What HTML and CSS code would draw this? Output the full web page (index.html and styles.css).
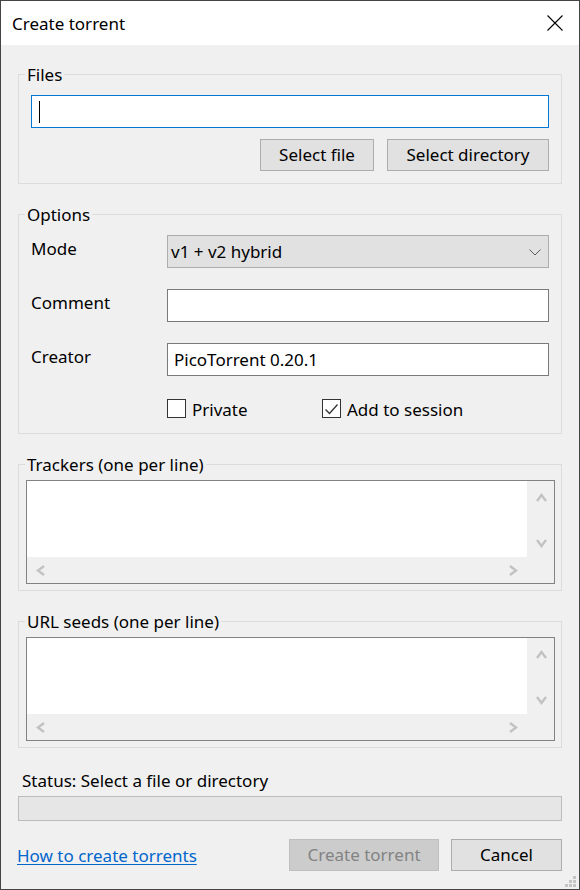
FILE: index.html
```html
<!DOCTYPE html>
<html lang="en">
<head>
<meta charset="utf-8">
<title>Create torrent</title>
<link rel="stylesheet" href="styles.css">
</head>
<body>
<div class="window">
  <div class="titlebar">
    <span class="title">Create torrent</span>
    <svg class="close" width="16" height="16" viewBox="0 0 16 16"><path d="M0.5 0.5L15.5 15.5M15.5 0.5L0.5 15.5" stroke="#000" stroke-width="1.1" fill="none"/></svg>
  </div>
  <div class="content">
    <fieldset class="group">
      <legend>Files</legend>
      <div class="inner files">
        <div class="textbox focused"><span class="caret"></span></div>
        <div class="btnrow">
          <button class="btn w-file">Select file</button>
          <button class="btn w-dir">Select directory</button>
        </div>
      </div>
    </fieldset>

    <fieldset class="group">
      <legend>Options</legend>
      <div class="inner options">
        <div class="row">
          <span class="lbl">Mode</span>
          <div class="select">
            <span>v1 + v2 hybrid</span>
            <svg class="chev" width="12" height="7" viewBox="0 0 12 7"><polyline points="0.5,0.5 6,6 11.5,0.5" fill="none" stroke="#5a5a5a" stroke-width="1"/></svg>
          </div>
        </div>
        <div class="row">
          <span class="lbl">Comment</span>
          <div class="textbox"></div>
        </div>
        <div class="row">
          <span class="lbl">Creator</span>
          <div class="textbox"><span class="val">PicoTorrent 0.20.1</span></div>
        </div>
        <div class="checks">
          <label class="check c-private"><span class="box"></span><span>Private</span></label>
          <label class="check"><span class="box"><svg width="17" height="17" viewBox="0 0 17 17"><polyline points="2.5,9.5 6.5,13.5 14.5,4.5" fill="none" stroke="#333" stroke-width="1.3"/></svg></span><span>Add to session</span></label>
        </div>
      </div>
    </fieldset>

    <fieldset class="group">
      <legend>Trackers (one per line)</legend>
      <div class="inner memo-wrap">
        <div class="memo">
          <div class="memo-text"></div>
          <div class="vscroll">
            <svg width="11" height="9" viewBox="0 0 11 9"><polyline points="1,8 5.5,2 10,8" fill="none" stroke="#c2c2c2" stroke-width="2.4"/></svg>
            <svg width="11" height="9" viewBox="0 0 11 9"><polyline points="1,1 5.5,7 10,1" fill="none" stroke="#c2c2c2" stroke-width="2.4"/></svg>
          </div>
          <div class="hscroll">
            <svg width="9" height="11" viewBox="0 0 9 11"><polyline points="8,1 2,5.5 8,10" fill="none" stroke="#c2c2c2" stroke-width="2.4"/></svg>
            <svg width="9" height="11" viewBox="0 0 9 11"><polyline points="1,1 7,5.5 1,10" fill="none" stroke="#c2c2c2" stroke-width="2.4"/></svg>
          </div>
          <div class="corner"></div>
        </div>
      </div>
    </fieldset>

    <fieldset class="group">
      <legend>URL seeds (one per line)</legend>
      <div class="inner memo-wrap">
        <div class="memo">
          <div class="memo-text"></div>
          <div class="vscroll">
            <svg width="11" height="9" viewBox="0 0 11 9"><polyline points="1,8 5.5,2 10,8" fill="none" stroke="#c2c2c2" stroke-width="2.4"/></svg>
            <svg width="11" height="9" viewBox="0 0 11 9"><polyline points="1,1 5.5,7 10,1" fill="none" stroke="#c2c2c2" stroke-width="2.4"/></svg>
          </div>
          <div class="hscroll">
            <svg width="9" height="11" viewBox="0 0 9 11"><polyline points="8,1 2,5.5 8,10" fill="none" stroke="#c2c2c2" stroke-width="2.4"/></svg>
            <svg width="9" height="11" viewBox="0 0 9 11"><polyline points="1,1 7,5.5 1,10" fill="none" stroke="#c2c2c2" stroke-width="2.4"/></svg>
          </div>
          <div class="corner"></div>
        </div>
      </div>
    </fieldset>

    <div class="status">Status: Select a file or directory</div>
    <div class="progress"></div>

    <div class="footer">
      <a class="link" href="#">How to create torrents</a>
      <div class="actions">
        <button class="btn w-create" disabled>Create torrent</button>
        <button class="btn w-cancel">Cancel</button>
      </div>
    </div>
  </div>
  <svg class="grip" width="12" height="12" viewBox="0 0 12 12">
    <rect x="8" y="0" width="3" height="3" fill="#c4c4c4"/>
    <rect x="4" y="4" width="3" height="3" fill="#c4c4c4"/>
    <rect x="8" y="4" width="3" height="3" fill="#c4c4c4"/>
    <rect x="0" y="8" width="3" height="3" fill="#c4c4c4"/>
    <rect x="4" y="8" width="3" height="3" fill="#c4c4c4"/>
    <rect x="8" y="8" width="3" height="3" fill="#c4c4c4"/>
  </svg>
</div>
</body>
</html>
```
FILE: styles.css
```css
* { box-sizing: border-box; }
html, body { margin: 0; padding: 0; }
body {
  width: 580px;
  height: 890px;
  background: #f0f0f0;
  font-family: "Noto Sans", "Open Sans", sans-serif;
  font-size: 17px;
  color: #000;
}
.window {
  position: relative;
  width: 580px;
  height: 890px;
  border: 1px solid #444;
  background: #f0f0f0;
  display: flex;
  flex-direction: column;
  overflow: hidden;
}
.titlebar {
  flex: none;
  height: 44px;
  background: #fff;
  display: flex;
  align-items: center;
  justify-content: space-between;
  padding: 0 16px 0 11px;
}
.title { font-size: 17px; line-height: 22px; padding-top: 1px; }
.close { display: block; }

.content {
  flex: 1;
  display: flex;
  flex-direction: column;
  padding: 18px 17px 0 17px;
}
.group {
  margin: 0 0 19px;
  padding: 0 6px;
  border: 1px solid #dcdcdc;
  min-width: 0;
}
.group legend {
  padding: 1px 2px 0;
  line-height: 22px;
  height: 22px;
}
.inner { display: flex; flex-direction: column; }
.inner.files { padding: 10px 6px 12px; }
.inner.options { padding: 10px 6px 15px; gap: 21px; }
.inner.memo-wrap { padding: 5px 0 6px 1px; }

.textbox {
  height: 33px;
  background: #fff;
  border: 1px solid #7a7a7a;
  display: flex;
  align-items: center;
}
.textbox.focused { border-color: #0078d7; }
.caret {
  display: block;
  width: 1px;
  height: 22px;
  margin-left: 7px;
  background: #000;
}
.textbox .val { padding-left: 6px; line-height: 22px; }

.btnrow {
  display: flex;
  justify-content: flex-end;
  gap: 13px;
  margin-top: 11px;
}
.btn {
  height: 32px;
  padding: 0;
  margin: 0;
  font: inherit;
  line-height: 22px;
  color: #000;
  background: #e1e1e1;
  border: 1px solid #adadad;
  border-radius: 0;
}
.w-file { width: 114px; }
.w-dir { width: 162px; }
.w-create { width: 150px; }
.w-cancel { width: 111px; }
.btn:disabled {
  background: #cccccc;
  border-color: #bfbfbf;
  color: #838383;
}

.row {
  display: grid;
  grid-template-columns: 136px 1fr;
  align-items: center;
  height: 33px;
}
.row .lbl { line-height: 22px; padding-bottom: 5px; }
.select {
  height: 33px;
  background: #e1e1e1;
  border: 1px solid #adadad;
  display: flex;
  align-items: center;
  justify-content: space-between;
  padding: 0 7px 0 3px;
}
.select span { line-height: 22px; }
.chev { display: block; margin-top: 2px; }

.checks {
  display: flex;
  padding-left: 136px;
  margin-top: 2px;
  height: 19px;
}
.check {
  display: flex;
  align-items: center;
  gap: 6px;
  line-height: 19px;
}
.check span:last-child { padding-top: 2px; }
.c-private { width: 155px; }
.box {
  width: 19px;
  height: 19px;
  background: #fff;
  border: 1px solid #333;
  display: flex;
}

.memo {
  height: 104px;
  border: 1px solid #828282;
  display: grid;
  grid-template-columns: 1fr 27px;
  grid-template-rows: 76px 1fr;
  background: #f0f0f0;
}
.memo-text { background: #fff; }
.vscroll {
  display: flex;
  flex-direction: column;
  justify-content: space-between;
  align-items: center;
  padding: 12px 0 9px 1px;
}
.hscroll {
  display: flex;
  justify-content: space-between;
  align-items: center;
  padding: 0 9px;
}
.vscroll svg, .hscroll svg { display: block; }

.status {
  margin-top: 3px;
  padding-left: 4px;
  line-height: 22px;
}
.progress {
  margin-top: 4px;
  height: 25px;
  background: #e6e6e6;
  border: 1px solid #bcbcbc;
}
.footer {
  margin-top: 18px;
  display: flex;
  justify-content: space-between;
  align-items: center;
}
.link {
  color: #0066cc;
  text-decoration: underline;
  text-underline-offset: 2px;
  line-height: 22px;
  margin-left: -1px;
  padding-top: 2px;
}
.actions { display: flex; gap: 12px; }
.grip {
  position: absolute;
  right: 2px;
  bottom: 1px;
}
```
